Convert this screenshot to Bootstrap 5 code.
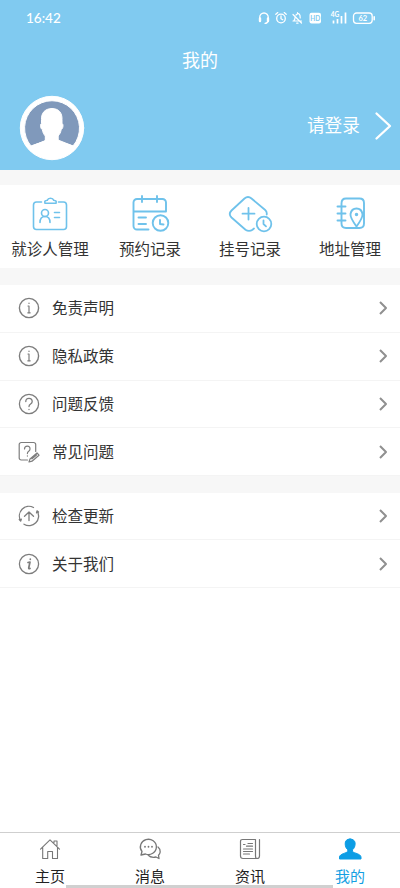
<!DOCTYPE html>
<html lang="zh-CN">
<head>
<meta charset="utf-8">
<meta name="viewport" content="width=device-width, initial-scale=1">
<title>我的</title>
<link href="https://cdn.jsdelivr.net/npm/bootstrap@5.3.0/dist/css/bootstrap.min.css" rel="stylesheet">
<style>
body{font-family:"Liberation Sans","Noto Sans CJK SC",sans-serif;height:888px;overflow:hidden;color:#333;font-size:15.5px;line-height:24px;background:#fff}
svg{display:block;flex:none;fill:none;stroke:currentColor;stroke-linecap:round;stroke-linejoin:round;overflow:visible}
.top-area{background:#80caf0;height:170px}
.status-bar{height:36px;padding:0 25px 0 26px}
.clock{font:500 13.5px/20px Lato,sans-serif}
.page-title{height:48px;line-height:50px;font-size:18px}
.profile{height:86px;padding:2px 9px 0 20px}
.login-text{font-size:17.7px;margin-right:15px;padding-bottom:4px}
.login-arrow{margin-bottom:5px}
.band{background:#f7f7f7}
.quick{height:83px;color:#6fc2eb;padding-top:9px}
.quick span{color:#333;margin-top:4px;white-space:nowrap}
.menu-row{height:47.75px;padding:0 11px 0 18px;border-bottom:1px solid #f4f4f4!important;border-radius:0;color:#333}
.menu-row svg{color:#7d7d7d}
.menu-row .arrow{color:#909090}
.menu-row span{margin-left:12px;padding-top:2px}
.tabs{height:56px;border-top:1.5px solid #cfcfcf;color:#222;font-size:15px}
.tabs svg{color:#777}
.tabs .tab-label{margin-top:4px}
.tabs .current{color:#149fe3}
.tabs .current svg{color:#0c9de5}
.home-bar{bottom:0;left:66px;width:267px;height:3.5px;background:#d0d0d0}
</style>
</head>
<body class="d-flex flex-column position-relative">
<header class="top-area text-white">
  <div class="status-bar d-flex align-items-center justify-content-between">
    <span class="clock">16:42</span>
    <svg width="118" height="14" viewBox="0 0 118 14" stroke-width="1.300">
      <path d="M2.700 8V6.500a4.300 4.500 0 0 1 8.600 0V8M11 10Q10.500 12.300 8 12.300"/><path stroke-width="2.400" d="M3 7.500v2.500M11 7.500v2.500"/>
      <circle cx="24" cy="7.500" r="4.300"/><path d="M24 5v2.700l1.800 1M18.800 3.300l2-1.700M29.200 3.300l-2-1.700"/>
      <path stroke-width="1.200" d="M36 10h8.500M37 9.500q1-1 1-3M39 4q3-3 4 .5l.2 2.500M36 3.500l8.500 8.500M39.700 12.200h1.300M40.500 1.600v.5"/>
      <rect x="52.500" y="1.700" width="11.500" height="10.800" rx="2" fill="currentColor" stroke="none"/>
      <text x="58.200" y="9.500" text-anchor="middle" font-size="6.500" font-weight="700" font-family="Lato,sans-serif" fill="#80caf0" stroke="none">HD</text>
      <text x="73.700" y="6.300" font-size="6.500" font-weight="700" font-family="Lato,sans-serif" fill="currentColor" stroke="none">4G</text>
      <path stroke-width="1.700" stroke-linecap="butt" d="M76.500 12.500V9.500M80.500 12.500V8M84.500 12.500V5M88.500 12.500V1.500"/>
      <rect x="96.500" y="2" width="18.700" height="10.300" rx="3"/><path stroke-width="1.600" d="M117.200 5.700v3"/>
      <text x="105.800" y="9.800" text-anchor="middle" font-size="7.500" font-weight="700" font-family="Lato,sans-serif" fill="currentColor" stroke="none">62</text>
    </svg>
  </div>
  <h1 class="page-title m-0 text-center fw-normal">我的</h1>
  <div class="profile d-flex align-items-center">
    <svg width="64" height="64" viewBox="0 0 64 64" stroke="none">
      <circle cx="32" cy="32" r="31.700" fill="#fff"/>
      <path fill="#8099bb" d="M11 50A27.500 27.500 0 1 1 53 50L38 44V20H26V44Z"/>
      <path fill="#fff" d="M32 12.500c-7 0-10.800 4.500-10.500 11v4c-1.800.5-1 5.500.8 6 .5 3 1.500 5 3 6.500v4.500C24 46.500 15 48 10.500 50.300 18 60 45 61 53.500 50.300 49 48 39.500 46.500 38 44.500V40c1.700-1.700 2.700-3.500 3.200-6.500 1.800-.5 2.600-5.500.8-6v-4C42.300 17 39 12.500 32 12.500Z"/>
    </svg>
    <span class="login-text ms-auto">请登录</span>
    <svg class="login-arrow" width="16" height="28" viewBox="0 0 16 28" stroke-width="2.300"><path d="M1.500 1.500 15 14 1.500 26.500"/></svg>
  </div>
</header>
<div class="band" style="height:15px"></div>
<nav class="quick row g-0 text-center">
  <div class="col d-flex flex-column align-items-center">
    <svg width="40" height="40" viewBox="0 0 40 40" stroke-width="1.600"><path d="M11.500 8H6.500a3 3 0 0 0-3 3v21.500a3 3 0 0 0 3 3h27a3 3 0 0 0 3-3V11a3 3 0 0 0-3-3h-5M15 9.200q-1-2.700 2.300-3 .7-2 3.200-2t3.200 2q3.300.3 2.300 3zM10 28.500q0-6 5-6t5 6M24.500 18.500h5M24.500 23.500h5"/><circle cx="15" cy="19" r="3.500"/></svg>
    <span>就诊人管理</span>
  </div>
  <div class="col d-flex flex-column align-items-center">
    <svg width="40" height="40" viewBox="0 0 40 40" stroke-width="1.900"><path d="M18.500 35.500H7a3.500 3.500 0 0 1-3.500-3.500V8.500A3.500 3.500 0 0 1 7 5h25.500A3.500 3.500 0 0 1 36 8.500v9H3.500M12 2V8M27 2V8M8.500 23.500H16M8.500 30H16M30 26v4l3.500.5"/><circle cx="30.500" cy="29" r="7.800"/></svg>
    <span>预约记录</span>
  </div>
  <div class="col d-flex flex-column align-items-center">
    <svg width="44" height="40" viewBox="0 0 44 40" stroke-width="1.800"><path d="M26 34.500l-1.500 1.200q-3.500 2.500-7 0L3.500 23.500q-3.500-3.500 0-7L16.500 4.500q3.500-3 7 0L37.200 16q2 1.800 1.500 4.500M20.500 14v11.500M14.500 19.700h12M35.500 26.500v3.500l2.500 2.300"/><circle cx="36" cy="30" r="7.300"/></svg>
    <span>挂号记录</span>
  </div>
  <div class="col d-flex flex-column align-items-center">
    <svg width="40" height="40" viewBox="0 0 40 40" stroke-width="1.900"><path d="M11.500 9.500q0-5 4.500-5h13.500q4.500 0 4.500 4.500v20.500q0 4.500-4.500 4.500H16q-4.500 0-4.500-4.500V9.500M7.500 12.500h8M7.500 19.500h8M7.500 26.500h8M26.500 32.500q-6.500-9-6-12.500 1-5.500 6-5.500t6 5.500q.5 3.500-6 12.500z"/><circle cx="26.500" cy="20.500" r=".8" fill="currentColor"/></svg>
    <span>地址管理</span>
  </div>
</nav>
<div class="band" style="height:17px"></div>
<section class="list-group list-group-flush">
  <a class="list-group-item menu-row d-flex align-items-center"><svg width="22" height="22" viewBox="0 0 22 22" stroke-width="1.400"><circle cx="11" cy="11" r="9.600"/><path stroke-width="1.200" d="M10 9h1v6.800M9.800 15.800h2.400M11 6v.4"/></svg><span>免责声明</span><svg class="arrow ms-auto" width="12" height="16" viewBox="0 0 12 16" stroke-width="2"><path stroke-linecap="butt" d="M3 2l6 6-6 6"/></svg></a>
  <a class="list-group-item menu-row d-flex align-items-center"><svg width="22" height="22" viewBox="0 0 22 22" stroke-width="1.400"><circle cx="11" cy="11" r="9.600"/><path stroke-width="1.200" d="M10 9h1v6.800M9.800 15.800h2.400M11 6v.4"/></svg><span>隐私政策</span><svg class="arrow ms-auto" width="12" height="16" viewBox="0 0 12 16" stroke-width="2"><path stroke-linecap="butt" d="M3 2l6 6-6 6"/></svg></a>
  <a class="list-group-item menu-row d-flex align-items-center"><svg width="22" height="22" viewBox="0 0 22 22" stroke-width="1.300"><circle cx="11" cy="11" r="9.600"/><path d="M7.800 8.500q0-3.200 3.200-3.200t3.200 3.200q0 1.500-1.600 2.500T11 13.500M11 16.300v.3"/></svg><span>问题反馈</span><svg class="arrow ms-auto" width="12" height="16" viewBox="0 0 12 16" stroke-width="2"><path stroke-linecap="butt" d="M3 2l6 6-6 6"/></svg></a>
  <a class="list-group-item menu-row d-flex align-items-center"><svg width="22" height="22" viewBox="0 0 22 22" stroke-width="1.200"><path d="M9.500 19H3.200a2 2 0 0 1-2-2V3.500a2 2 0 0 1 2-2h12.500a2 2 0 0 1 2 2v7M6.500 8q0-2.800 2.800-2.800T12 8q0 1.300-1.300 2.200T9.400 12.600M9.400 14.800v.3M12 18l7-6 2 2.200-7 6-3 .8zM14 17.800l4.500-3.800"/></svg><span>常见问题</span><svg class="arrow ms-auto" width="12" height="16" viewBox="0 0 12 16" stroke-width="2"><path stroke-linecap="butt" d="M3 2l6 6-6 6"/></svg></a>
</section>
<div class="band" style="height:16.500px"></div>
<section class="list-group list-group-flush">
  <a class="list-group-item menu-row d-flex align-items-center"><svg width="22" height="22" viewBox="0 0 22 22" stroke-width="1.300"><path d="M2.700 15.800A9.600 9.600 0 0 1 15.500 2.500M6 19.200A9.600 9.600 0 0 0 19.200 6M1.300 14.500l1.400 1.600.6-1.900M18.500 7.800l.5-2 1.500 1.300M11 15.500V7.200M6.500 11.200 11 7l4.500 4.200"/></svg><span>检查更新</span><svg class="arrow ms-auto" width="12" height="16" viewBox="0 0 12 16" stroke-width="2"><path stroke-linecap="butt" d="M3 2l6 6-6 6"/></svg></a>
  <a class="list-group-item menu-row d-flex align-items-center"><svg width="22" height="22" viewBox="0 0 22 22" stroke-width="1.300"><circle cx="11" cy="11" r="9.600"/><path stroke-width="1.700" d="M10 9.500l2-.5-1.300 6q0 1.200 1.300.5M12.300 6v.3"/></svg><span>关于我们</span><svg class="arrow ms-auto" width="12" height="16" viewBox="0 0 12 16" stroke-width="2"><path stroke-linecap="butt" d="M3 2l6 6-6 6"/></svg></a>
</section>
<nav class="tabs row g-0 mt-auto flex-shrink-0">
  <div class="col d-flex flex-column align-items-center pt-1">
    <svg width="24" height="24" viewBox="0 0 24 24" stroke-width="1.100"><path d="M2.500 12.200 12 2.800l9.500 9.400M4.700 10.500V21.500h5v-7h4.800v7h5V10.500M16 5.500V4h3v4.500"/></svg><span class="tab-label">主页</span>
  </div>
  <div class="col d-flex flex-column align-items-center pt-1">
    <svg width="24" height="24" viewBox="0 0 24 24" stroke-width="1.300"><path d="M3 18l1-3.500A8 7.600 0 1 1 7.500 17zM20 10q2.500 2 2.200 5-.3 2-1.700 3.300l.5 3.200-3-1.500q-5 1.200-8-2"/><path stroke-width="1.800" d="M7 9.700v.1M10.500 9.700v.1M14 9.700v.1"/></svg><span class="tab-label">消息</span>
  </div>
  <div class="col d-flex flex-column align-items-center pt-1">
    <svg width="24" height="24" viewBox="0 0 24 24" stroke-width="1.200"><path d="M21.500 2.500V19q0 2.500-2.500 2.500H5q-2.500 0-2.500-2.500V4.500q0-2 2-2H17.500V19q0 2.500 1.500 2.500M10 6.500h4.500M8.500 9.200h6M5.500 12h9M5.500 14.500h9M5.500 17h6M5.500 7.500h1.500"/></svg><span class="tab-label">资讯</span>
  </div>
  <div class="col d-flex flex-column align-items-center pt-1 current">
    <svg width="24" height="24" viewBox="0 0 24 24" stroke="none"><path fill="currentColor" d="M12 2C8.700 2 7 4 7.200 7c.1 2.700 1 4.500 2.600 5.800v1.700c-1.500 1.700-8 2.300-8.300 5.500V22h21.500v-2c-.3-3.200-7-3.800-8.500-5.500v-1.700C16 11.500 17 9.700 17.100 7 17.300 4 15.300 2 12 2Z"/></svg><span class="tab-label">我的</span>
  </div>
</nav>
<div class="home-bar position-absolute"></div>
<script src="https://cdn.jsdelivr.net/npm/bootstrap@5.3.0/dist/js/bootstrap.bundle.min.js"></script>
</body>
</html>
